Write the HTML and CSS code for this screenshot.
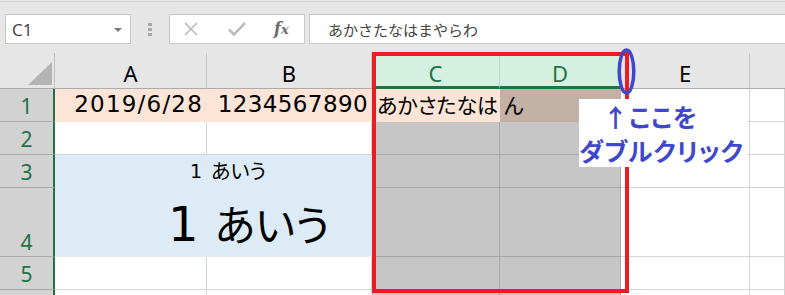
FILE: index.html
```html
<!DOCTYPE html>
<html lang="ja">
<head>
<meta charset="utf-8">
<link rel="stylesheet" href="styles.css">
</head>
<body>
<div class="app">
  <div class="toolbar">
    <div class="namebox"><span class="nb-text">C1</span><span class="dd"></span></div>
    <div class="grip"><i></i><i></i><i></i></div>
    <div class="fnbox">
      <svg class="ic ic-x" width="16" height="14" viewBox="0 0 16 14"><path d="M2 1 L14 13 M14 1 L2 13" stroke="#b9b9b9" stroke-width="1.6" fill="none"/></svg>
      <svg class="ic ic-ok" width="18" height="14" viewBox="0 0 18 14"><path d="M1 7.5 L6 12.5 L17 1" stroke="#bdbdbd" stroke-width="2.6" fill="none"/></svg>
      <span class="fx">f<span class="fx-x">x</span></span>
    </div>
    <div class="formula">あかさたなはまやらわ</div>
  </div>
  <div class="sheet">
    <div class="hd corner"><span class="tri"></span></div>
    <div class="hd colh">A</div>
    <div class="hd colh">B</div>
    <div class="hd colh colsel">C</div>
    <div class="hd colh colsel">D</div>
    <div class="hd colh">E</div>
    <div class="hd colh colf"></div>

    <div class="rh">1</div>
    <div class="c peach num r wide">2019/6/28</div>
    <div class="c peach num r">1234567890</div>
    <div class="c peach jp clip"><span class="clip-in">あかさたなはまやらわ</span></div>
    <div class="c selpeach jp">ん</div>
    <div class="c"></div>
    <div class="c"></div>

    <div class="rh">2</div>
    <div class="c"></div>
    <div class="c"></div>
    <div class="c sel"></div>
    <div class="c sel"></div>
    <div class="c"></div>
    <div class="c"></div>

    <div class="rh">3</div>
    <div class="c blue small"><span class="d">1</span><span class="k">あいう</span></div>
    <div class="c sel"></div>
    <div class="c sel"></div>
    <div class="c"></div>
    <div class="c"></div>

    <div class="rh rh-bottom">4</div>
    <div class="c blue big"><span class="d">1</span><span class="k">あいう</span></div>
    <div class="c sel"></div>
    <div class="c sel"></div>
    <div class="c"></div>
    <div class="c"></div>

    <div class="rh">5</div>
    <div class="c"></div>
    <div class="c"></div>
    <div class="c sel"></div>
    <div class="c sel"></div>
    <div class="c"></div>
    <div class="c"></div>

    <div class="rh"></div>
    <div class="c"></div>
    <div class="c"></div>
    <div class="c sel"></div>
    <div class="c sel"></div>
    <div class="c"></div>
    <div class="c"></div>
  </div>

  <div class="redbox"></div>
  <svg class="ellipse" width="22" height="48" viewBox="0 0 22 48"><ellipse cx="10.5" cy="23.5" rx="7.3" ry="21.5" stroke="#3f48cc" stroke-width="3.5" fill="none"/></svg>
  <div class="note">
    <div class="note-l1">↑ここを</div>
    <div class="note-l2">ダブルクリック</div>
  </div>
</div>
</body>
</html>
```

FILE: styles.css
```css
* { box-sizing: border-box; }
html, body { margin: 0; padding: 0; }
body {
  width: 785px;
  height: 295px;
  overflow: hidden;
  background: #e6e6e6;
  font-family: "DejaVu Sans", "Noto Sans CJK JP", sans-serif;
}
.app {
  position: relative;
  width: 785px;
  height: 295px;
  overflow: hidden;
}
.toolbar {
  height: 52px;
  border-top: 1px solid #d2d2d2;
  margin-top: 1px;
  display: flex;
  align-items: flex-start;
  padding: 12px 0 0 5px;
}
.namebox {
  width: 126px;
  height: 30px;
  background: #fff;
  border: 1px solid #c6c6c6;
  display: flex;
  align-items: center;
  justify-content: space-between;
  padding: 0 8px 0 6px;
}
.nb-text {
  font-family: "Open Sans", "Noto Sans", sans-serif;
  font-size: 17px;
  color: #3a3a3a;
}
.dd {
  width: 0;
  height: 0;
  border-left: 4px solid transparent;
  border-right: 4px solid transparent;
  border-top: 4px solid #7a7a7a;
  margin-top: 1px;
}
.grip {
  width: 38px;
  height: 30px;
  display: flex;
  flex-direction: column;
  align-items: center;
  justify-content: center;
  gap: 2px;
}
.grip i {
  display: block;
  width: 4px;
  height: 3px;
  background: #a8a8a8;
}
.fnbox {
  width: 136px;
  height: 30px;
  background: #fff;
  border: 1px solid #c6c6c6;
  display: flex;
  align-items: center;
  padding-left: 13px;
}
.ic-x { margin-right: 29px; }
.ic-ok { margin-right: 28px; }
.fx {
  font-family: "DejaVu Serif", "Liberation Serif", serif;
  font-style: italic;
  font-weight: bold;
  font-size: 16px;
  color: #6a6a6a;
  margin-top: -2px;
}
.fx-x { font-size: 13px; }
.formula {
  flex: 1;
  margin-left: 4px;
  margin-right: -10px;
  height: 30px;
  background: #fff;
  border: 1px solid #c6c6c6;
  display: flex;
  align-items: center;
  padding-left: 18px;
  font-family: "Noto Sans CJK JP", sans-serif;
  font-size: 15px;
  color: #444;
}
.sheet {
  display: grid;
  grid-template-columns: 55px 152px 165px 128px 121px 129px 1fr;
  grid-template-rows: 36px 33px 33px 33px 69px 33px 40px;
  background: #fff;
}
.hd {
  background: #e6e6e6;
  border-right: 1px solid #c9c9c9;
  border-bottom: 1px solid #ababab;
  display: flex;
  align-items: center;
  justify-content: center;
  font-family: "Noto Sans", sans-serif;
  font-size: 22px;
  color: #000;
  padding-top: 4px;
}
.corner {
  position: relative;
  border-right: 1px solid #bdbdbd;
}
.tri {
  position: absolute;
  right: 2px;
  bottom: 3px;
  width: 0;
  height: 0;
  border-left: 24px solid transparent;
  border-bottom: 23px solid #b4b4b4;
}
.colsel {
  background: #d3f0e0;
  color: #217346;
  border-right-color: #bcd7c6;
  border-bottom: 3px solid #217346;
  padding-top: 6px;
}
.colf { border-right: none; }
.rh {
  background: #d2d2d2;
  border-right: 2px solid #217346;
  border-bottom: 1px solid #ababab;
  display: flex;
  align-items: center;
  justify-content: center;
  font-family: "Noto Sans", sans-serif;
  font-size: 21px;
  color: #217346;
  padding-top: 2px;
}
.rh-bottom {
  align-items: flex-end;
  padding-bottom: 0;
}
.c {
  border-right: 1px solid #d4d4d4;
  border-bottom: 1px solid #d4d4d4;
  display: flex;
  align-items: flex-end;
  overflow: hidden;
  white-space: nowrap;
}
.peach {
  background: #fce4d6;
  border-color: #fce4d6;
}
.selpeach {
  background: #c4b1a5;
  border-color: #c4b1a5;
}
.sel {
  background: #c6c6c6;
  border-color: #a6a6a6;
}
.num {
  font-family: "DejaVu Sans", sans-serif;
  font-size: 23px;
  letter-spacing: 0.4px;
  padding-bottom: 4px;
}
.wide { letter-spacing: 1.2px; }
.r {
  justify-content: flex-end;
  padding-right: 3px;
}
.jp {
  font-family: "Noto Sans CJK JP", sans-serif;
  font-feature-settings: "palt";
  font-size: 21px;
  padding-left: 4px;
  padding-bottom: 2px;
}
.clip { overflow: hidden; padding-left: 5px; }
.clip-in {
  display: block;
  width: 100%;
  overflow: hidden;
}
.blue {
  grid-column: span 2;
  background: #ddebf7;
  border-color: #ddebf7;
}
.small {
  padding-left: 135px;
  padding-bottom: 3px;
  line-height: 1.3;
}
.small .d {
  font-family: "DejaVu Sans", sans-serif;
  font-size: 19px;
  margin-right: 9px;
}
.small .k {
  font-family: "Noto Sans CJK JP", sans-serif;
  font-feature-settings: "palt";
  font-size: 20px;
}
.big {
  padding-left: 113px;
  padding-bottom: 8px;
  align-items: baseline;
  align-content: flex-end;
  flex-wrap: wrap;
}
.big .d {
  font-family: "DejaVu Sans", sans-serif;
  font-size: 48px;
  line-height: 1;
  margin-right: 16px;
}
.big .k {
  font-family: "Noto Sans CJK JP", sans-serif;
  font-feature-settings: "palt";
  font-size: 42px;
  line-height: 1;
}
.redbox {
  position: absolute;
  left: 372px;
  top: 52px;
  width: 257px;
  height: 241px;
  border: 4px solid #ed1c24;
}
.ellipse {
  position: absolute;
  left: 616px;
  top: 48px;
}
.note {
  position: absolute;
  left: 579px;
  top: 99px;
  width: 168px;
  height: 68px;
  background: #fff;
  color: #3f48cc;
  font-family: "Noto Sans CJK JP", sans-serif;
  font-feature-settings: "palt";
  font-weight: bold;
  font-size: 25px;
  line-height: 34px;
  white-space: nowrap;
}
.note-l1 { padding-left: 24px; letter-spacing: 1px; }
.note-l2 { padding-left: 0; letter-spacing: 0.8px; }
```
